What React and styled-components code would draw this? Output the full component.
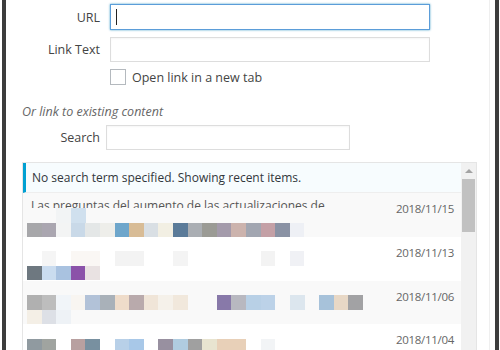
import React from 'react';
import styled, { createGlobalStyle } from 'styled-components';

const GlobalStyle = createGlobalStyle`
  html, body {
    margin: 0;
    padding: 0;
    background: #fff;
  }
  body {
    font-family: "Open Sans", "Noto Sans", Arial, sans-serif;
    font-size: 12px;
    color: #444;
  }
`;

const CELL = 14.6;

// pixelated titles, one string of colours per mosaic line ('' = no cell)
const results = [
  {
    title: 'Las preguntas del aumento de las actualizaciones de',
    date: '2018/11/15',
    alt: true,
    mosaic: [
      ['', '', '#f2f4f5', '#d0e0ee', '', '', '', '', '', '', '', '', '', '', '', '', '', '', ''],
      ['#a7a7aa', '#aaa6b0', '#f3f4f4', '#c9d9e8', '#e4e7e7', '#eeeeea', '#6ea6cb', '#d8bc96', '#d9dfe4', '#f2efe3', '#5b7b99', '#aaaeb3', '#9b9b95', '#a49bab', '#ccb3ad', '#a2a6b1', '#c4a0a6', '#8a92a4', '#eef0f5'],
    ],
  },
  {
    date: '2018/11/13',
    mosaic: [
      ['', '#f5f5f5', '', '#faf7f4', '#faf7f4', '', '#f3f3f3', '#f3f3f3', '', '', '#f4f4f4', '', '', '', '', '', '#f3f3f3', '', '#f0f1f5'],
      ['#6e7880', '#cadcef', '#a9c2e0', '#8b52a9', '#e9e2e2'],
    ],
  },
  {
    date: '2018/11/06',
    alt: true,
    mosaic: [
      ['#b0b0b0', '#bdbdbd', '#f1f5f9', '#f8f5f1', '#b2c2d8', '#a9b1b9', '#efdcca', '#b9aaac', '#f0e5d8', '#f5f1ea', '#f1e8dc', '', '', '#8879a9', '#b8b8c0', '#b8d0e6', '#bcd2e8', '', '#dce6ee', '', '#a7c2da', '#e8d8c6', '#a2a2a4'],
      ['#f4efe6', '#dde0e6', '#eef2f6'],
    ],
  },
  {
    date: '2018/11/04',
    mosaic: [
      ['#909aa0', '#a0a4a0', '', '#b8a0a0', '#7890a0', '', '#b8d0e8', '#a8c8e8', '', '#9890a0', '#b0cce0', '#a0a0a0', '#e8e4d0', '#e8d0b8', '#e8d0b8', '', '#f2f4f6'],
    ],
  },
];

const Frame = styled.div`
  box-sizing: border-box;
  width: 497px;
  height: 350px;
  margin-left: 2px;
  border-left: 4px solid #3d3d3d;
  border-right: 4px solid #3d3d3d;
  overflow: hidden;
`;

const Panel = styled.div`
  box-sizing: border-box;
  width: 484px;
  height: 100%;
  border-right: 1px solid #efefef;
  padding-top: 4px;
`;

const FieldRow = styled.div`
  display: flex;
  align-items: center;
  gap: ${p => p.$gap || 10}px;
  margin-top: ${p => p.$mt || 0}px;
  margin-bottom: ${p => p.$mb || 0}px;
`;

const Label = styled.label`
  width: 94px;
  text-align: right;
  color: #444;
  font-size: 12.5px;
`;

const Field = styled.div`
  box-sizing: border-box;
  width: ${p => p.$w}px;
  height: ${p => p.$h || 25}px;
  background: #fff;
  border: 1px solid ${p => (p.$focused ? '#5b9dd9' : '#ddd')};
  box-shadow: ${p => (p.$focused ? '0 0 2px rgba(30, 140, 190, 0.8)' : 'inset 0 1px 2px rgba(0, 0, 0, 0.04)')};
  display: flex;
  align-items: center;
  padding-left: 5px;
`;

const Caret = styled.span`
  width: 1px;
  height: 16px;
  background: #222;
`;

const CheckRow = styled.label`
  display: flex;
  align-items: center;
  gap: 6px;
  margin-left: 104px;
  height: 16px;
  color: #444;
  font-size: 12.5px;
`;

const Checkbox = styled.span`
  box-sizing: border-box;
  width: 16px;
  height: 16px;
  border: 1px solid #b4b9be;
  background: #fff;
`;

const Hint = styled.p`
  margin: 18px 0 0 16px;
  font-style: italic;
  color: #666;
  line-height: 18px;
  font-size: 12.5px;
`;

const Results = styled.div`
  box-sizing: border-box;
  margin: 12px 0 0 16px;
  width: 455px;
  height: 190px;
  border: 1px solid #e5e5e5;
  border-bottom: none;
  display: flex;
`;

const List = styled.div`
  flex: 1;
  min-width: 0;
`;

const Notice = styled.div`
  box-sizing: border-box;
  height: 30px;
  display: flex;
  align-items: center;
  padding-left: 6px;
  background: #f7fcfe;
  border-left: 3px solid #00a0d2;
  border-bottom: 1px solid #eee;
  color: #32373c;
`;

const Item = styled.div`
  display: flex;
  height: ${CELL * 3}px;
  background: ${p => (p.$alt ? '#f9f9f9' : '#fff')};
  overflow: hidden;
`;

const Title = styled.div`
  flex: 1;
  padding-left: 4px;
`;

const TitleClip = styled.div`
  height: ${CELL}px;
  overflow: hidden;
  box-sizing: border-box;
  padding: 5px 0 0 4px;
  line-height: 16px;
  white-space: nowrap;
  color: #555;
`;

const Date = styled.div`
  padding: 8px 7px 0 0;
  line-height: 16px;
  font-size: 11.5px;
  letter-spacing: -0.3px;
  color: #666;
`;

const Scrollbar = styled.div`
  width: 15px;
  background: #f1f1f1;
  display: flex;
  flex-direction: column;
  align-items: center;
`;

const Arrow = styled.span`
  margin-top: 6px;
  width: 0;
  height: 0;
  border-left: 4px solid transparent;
  border-right: 4px solid transparent;
  border-bottom: 4px solid #a3a3a3;
`;

const Thumb = styled.div`
  margin-top: 6px;
  width: 13px;
  height: 53px;
  background: #c1c1c1;
`;

const Mosaic = ({ lines }) => {
  const cols = Math.max(...lines.map(l => l.length));
  return (
    <svg
      width={cols * CELL}
      height={lines.length * CELL}
      viewBox={`0 0 ${cols} ${lines.length}`}
      preserveAspectRatio="none"
      shapeRendering="crispEdges"
      style={{ display: 'block' }}
    >
      {lines.map((line, y) =>
        line.map((c, x) => (c ? <rect key={`${x}-${y}`} x={x} y={y} width="1.02" height="1.02" fill={c} /> : null))
      )}
    </svg>
  );
};

const App = () => {
  return (
    <>
      <GlobalStyle />
      <Frame>
        <Panel>
          <FieldRow $mb={7}>
            <Label>URL</Label>
            <Field $w={320} $h={26} $focused>
              <Caret />
            </Field>
          </FieldRow>
          <FieldRow $mb={7}>
            <Label>Link Text</Label>
            <Field $w={320} />
          </FieldRow>
          <CheckRow>
            <Checkbox />
            Open link in a new tab
          </CheckRow>
          <Hint>Or link to existing content</Hint>
          <FieldRow $gap={6} $mt={4}>
            <Label>Search</Label>
            <Field $w={244} />
          </FieldRow>
          <Results>
            <List>
              <Notice>No search term specified. Showing recent items.</Notice>
              {results.map((r, i) => (
                <Item key={i} $alt={r.alt}>
                  <Title>
                    <TitleClip>{r.title}</TitleClip>
                    <Mosaic lines={r.mosaic} />
                  </Title>
                  <Date>{r.date}</Date>
                </Item>
              ))}
            </List>
            <Scrollbar>
              <Arrow />
              <Thumb />
            </Scrollbar>
          </Results>
        </Panel>
      </Frame>
    </>
  );
};

export default App;
